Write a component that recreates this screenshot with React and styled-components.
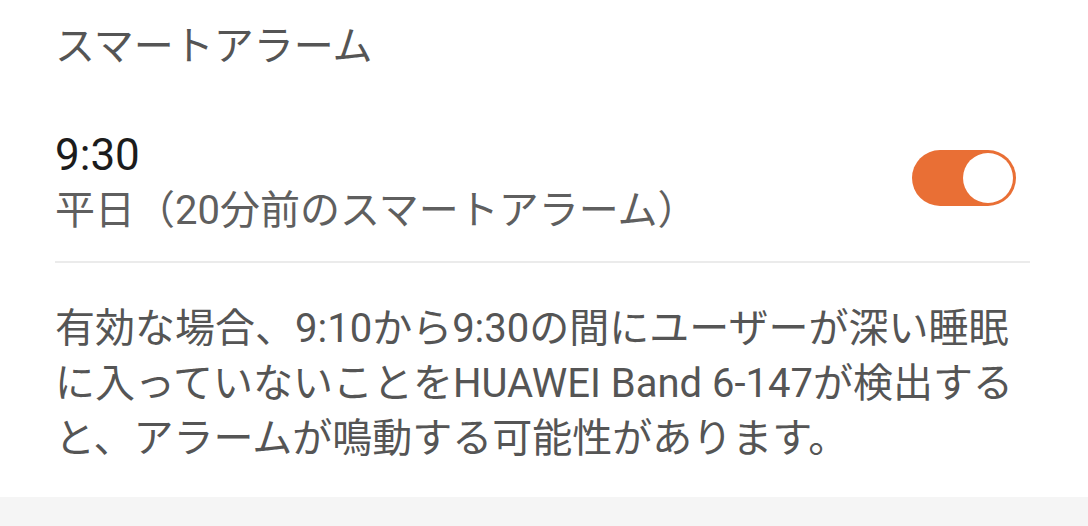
import React from "react";
import styled, { createGlobalStyle } from "styled-components";

const Global = createGlobalStyle`
  html, body { margin: 0; padding: 0; background: #ffffff; }
  body { font-family: Roboto, "Noto Sans CJK JP", sans-serif; }
`;

const Page = styled.div`
  width: 1088px;
  height: 526px;
  display: flex;
  flex-direction: column;
  background: #ffffff;
  overflow: hidden;
`;

const Card = styled.section`
  padding: 20px 58px 0 55px;
  display: flex;
  flex-direction: column;
`;

const SectionTitle = styled.h2`
  margin: 0;
  font-weight: 400;
  font-size: 40px;
  line-height: 54px;
  color: #555555;
`;

const Row = styled.div`
  margin-top: 53px;
  display: flex;
  align-items: center;
  justify-content: space-between;
  padding-bottom: 22px;
  border-bottom: 2px solid #ebebeb;
`;

const TextCol = styled.div`
  display: flex;
  flex-direction: column;
`;

const Primary = styled.div`
  font-size: 44px;
  line-height: 56px;
  color: #1c1c1c;
`;

const Secondary = styled.div`
  font-size: 40px;
  line-height: 56px;
  color: #5f5f5f;
`;

const Switch = styled.button`
  position: relative;
  width: 104px;
  height: 56px;
  margin: 0 14px 11px 0;
  padding: 0;
  border: none;
  border-radius: 28px;
  background: ${(p) => (p.$on ? "#e96f35" : "#cccccc")};
  cursor: pointer;
  &::after {
    content: "";
    position: absolute;
    top: 3px;
    left: ${(p) => (p.$on ? "51px" : "3px")};
    width: 50px;
    height: 50px;
    border-radius: 50%;
    background: #ffffff;
  }
`;

const Body = styled.p`
  margin: 0;
  padding: 38px 0 31px;
  font-size: 40px;
  line-height: 55px;
  color: #555555;
`;

const Footer = styled.div`
  flex: 1;
  background: #f5f5f5;
`;

export default function App() {
  return (
    <>
      <Global />
      <Page>
        <Card>
          <SectionTitle>スマートアラーム</SectionTitle>
          <Row>
            <TextCol>
              <Primary>9:30</Primary>
              <Secondary>平日（20分前のスマートアラーム）</Secondary>
            </TextCol>
            <Switch $on aria-label="toggle" />
          </Row>
          <Body>
            有効な場合、9:10から9:30の間にユーザーが深い睡眠
            <br />
            に入っていないことをHUAWEI Band 6-147が検出する
            <br />
            と、アラームが鳴動する可能性があります。
          </Body>
        </Card>
        <Footer />
      </Page>
    </>
  );
}
